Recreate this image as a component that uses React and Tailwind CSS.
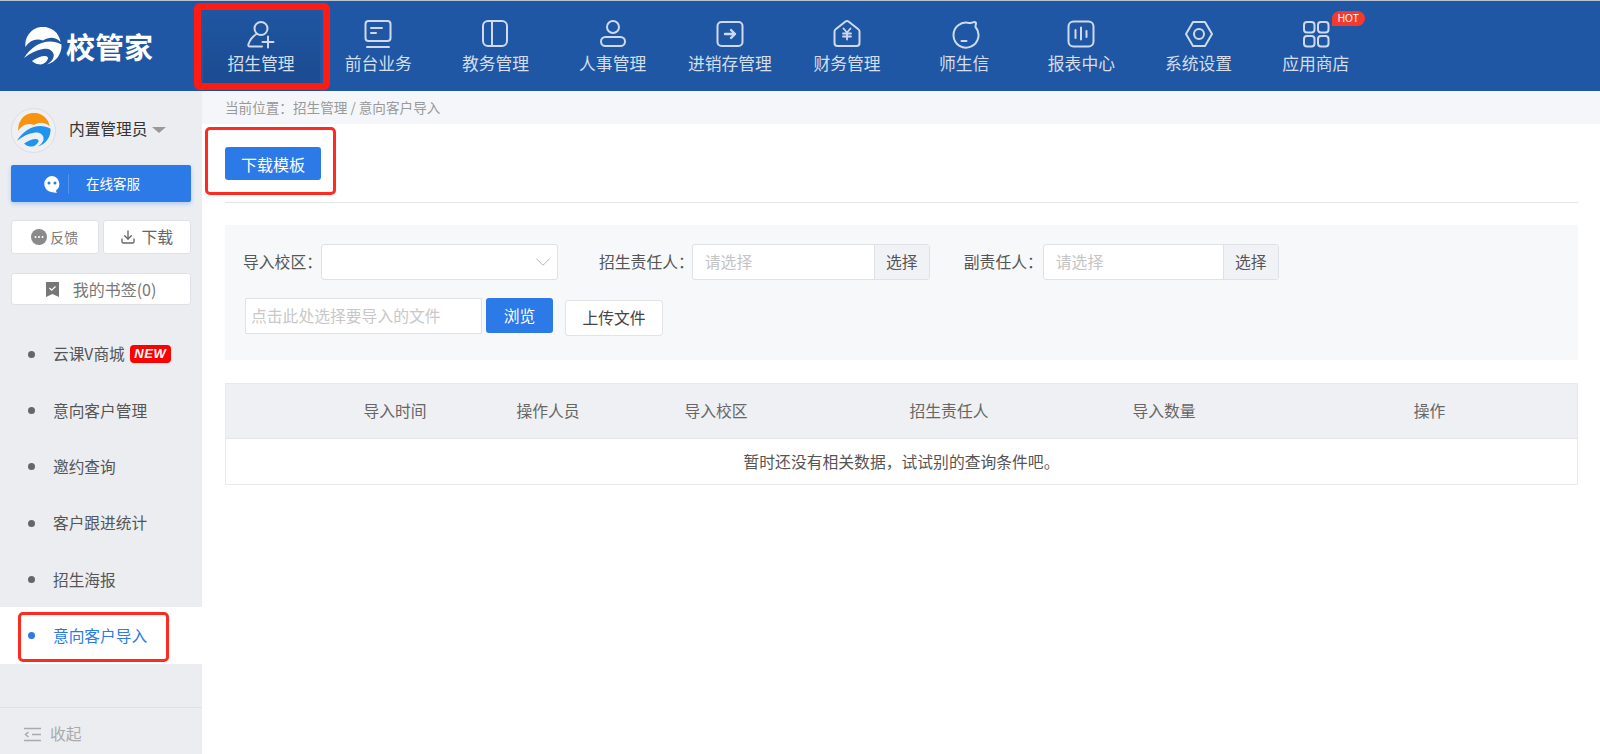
import { ChevronDown, Download } from "lucide-react";

const FONT = "font-['Noto_Sans_CJK_SC','Noto_Sans',sans-serif]";

function Svg({ children }) {
  return (
    <svg width="32" height="32" viewBox="0 0 32 32" fill="none" stroke="#cfdaee" strokeWidth="2" strokeLinecap="round" strokeLinejoin="round">
      {children}
    </svg>
  );
}

// same swoosh is used for the header logo and the avatar, just other colours
function Swoosh({ size, top, bottom }) {
  return (
    <svg width={size} height={size} viewBox="0 0 38 38">
      <path d="M1.500 20A17.500 17.500 0 0 1 36.500 15C31 9.500 25 10 19 13.500 12 10.500 5 14 1.500 20z" fill={top} />
      <path d="M0 31C6 21 16 14.500 26 14.500c4 0 8 1 11.500 3C38 27 32 35 23 37.500c5-3 7.500-7 6.500-10.500-1-4-5.500-6-10.500-5C12 23 6 26.500 0 31z" fill={bottom} />
      <path d="M8 34c4-3 9-5 13-5 2 0 3 1 3 2.500-1 3-4 5.500-7 6-3 0-7-1-9-3.500z" fill={bottom} />
    </svg>
  );
}

const navItems = [
  {
    label: "招生管理",
    active: true,
    icon: (
      <Svg>
        <circle cx="16" cy="10.500" r="6.500" />
        <path d="M11.500 16C8 18 5 22 3.500 26c-.5 1.500 0 2.500 1.500 2.500h12" />
        <path d="M17.500 24h11M23 18.500v11" />
      </Svg>
    ),
  },
  {
    label: "前台业务",
    icon: (
      <Svg>
        <rect x="3.500" y="3" width="25" height="20" rx="3" />
        <path d="M9 10h11M9 15h5M5 29h22" />
      </Svg>
    ),
  },
  {
    label: "教务管理",
    icon: (
      <Svg>
        <rect x="4" y="3" width="24" height="25" rx="5" />
        <path d="M13 3v25" />
      </Svg>
    ),
  },
  {
    label: "人事管理",
    icon: (
      <Svg>
        <circle cx="16" cy="9" r="6" />
        <rect x="4" y="19" width="24" height="9" rx="4.500" />
      </Svg>
    ),
  },
  {
    label: "进销存管理",
    icon: (
      <Svg>
        <rect x="3.500" y="4" width="25" height="24" rx="4" />
        <path d="M11 16h10M17 12l4 4-4 4" strokeWidth="2.400" />
      </Svg>
    ),
  },
  {
    label: "财务管理",
    icon: (
      <Svg>
        <path d="M14.500 3.500 5 11c-1 .7-1.500 1.500-1.500 2.500V25c0 2 1 3 3 3h19c2 0 3-1 3-3V13.500c0-1-.5-1.800-1.500-2.500l-9.500-7.500c-1-.7-2-.7-3 0z" />
        <path d="m12.500 10.500 3.500 4 3.500-4M12 15.500h8M12 18.500h8M16 14.500v7" strokeWidth="1.800" />
      </Svg>
    ),
  },
  {
    label: "师生信",
    icon: (
      <Svg>
        <path d="M26.500 4c1 0 1.500.5 1.500 1.500 0 1-.7 2-.5 3.500A12.500 12.500 0 1 1 21 5c2 .5 3.500-1 5.500-1z" />
        <path d="M13.500 23h5" />
      </Svg>
    ),
  },
  {
    label: "报表中心",
    icon: (
      <Svg>
        <rect x="3.500" y="3.500" width="25" height="25" rx="5" />
        <path d="M10.500 12v8M16 9.500v12M21.500 13v6" />
      </Svg>
    ),
  },
  {
    label: "系统设置",
    icon: (
      <Svg>
        <path d="M10 4h12l7 12-7 12H10L3 16z" />
        <circle cx="16" cy="16" r="5" />
      </Svg>
    ),
  },
  {
    label: "应用商店",
    hot: true,
    icon: (
      <Svg>
        <rect x="4" y="4" width="10.500" height="10.500" rx="3" />
        <rect x="18" y="4" width="10.500" height="10.500" rx="3" />
        <rect x="4" y="18" width="10.500" height="10.500" rx="3" />
        <rect x="18" y="18" width="10.500" height="10.500" rx="3" />
      </Svg>
    ),
  },
];

const menuItems = ["云课V商城", "意向客户管理", "邀约查询", "客户跟进统计", "招生海报", "意向客户导入"];

const columns = ["", "导入时间", "操作人员", "导入校区", "招生责任人", "导入数量", "操作"];

function Logo() {
  return (
    <div className="flex items-center pl-[24px] w-[202.500px] shrink-0">
      <Swoosh size={38} top="#fff" bottom="#fff" />
      <span className="text-white text-[29px] font-bold leading-none ml-[4px]">校管家</span>
    </div>
  );
}

function NavItem({ item }) {
  return (
    <div className={`relative w-[117.200px] h-full flex flex-col items-center pt-[17px] ${item.active ? "bg-gradient-to-b from-[#1f57a4] to-[#1b4a8e]" : ""}`}>
      <div className="relative h-[32px]">
        {item.icon}
        {item.hot && (
          <span className="absolute left-[32px] top-[-7px] w-[33px] h-[15px] rounded-[8px] rounded-bl-none bg-[#f5392d] text-white text-[10px] leading-[15px] text-center font-['Liberation_Sans',sans-serif]">
            HOT
          </span>
        )}
      </div>
      <span className="text-[#d5deed] text-[16.800px] leading-[22px] mt-[2px] whitespace-nowrap">{item.label}</span>
      {item.active && (
        <span className="absolute left-[-9px] right-[-10px] top-[2px] bottom-[1px] border-[7px] border-[#ff1a12] rounded-[6px]" />
      )}
    </div>
  );
}

function Avatar() {
  return (
    <div className="w-[45px] h-[45px] rounded-full bg-[#eff0f3] border border-[#dcdee3] flex items-center justify-center">
      <Swoosh size={34} top="#f7930f" bottom="#1f94ee" />
    </div>
  );
}

function Sidebar() {
  return (
    <aside className="w-[202px] shrink-0 bg-[#ebedf1] flex flex-col">
      <div className="flex items-center pl-[11px] pt-[4px] h-[74px]">
        <Avatar />
        <span className="ml-[13px] mb-[3px] text-[15.700px] text-[#333]">内置管理员</span>
        <span className="ml-[5px] border-x-[7px] border-x-transparent border-t-[6px] border-t-[#999]" />
      </div>
      <div className="mx-[11px] h-[37px] bg-[#2b7ae8] rounded-[2px] shadow-[0_2px_4px_rgba(43,122,232,0.3)] flex items-center text-white">
        <svg className="ml-[32px]" width="18" height="18" viewBox="0 0 18 18" fill="#fff">
          <path d="M9 1a8 8 0 0 0-1 15.900c2 .3 4 .9 6 1.100-1-1-1-2-.8-2.700A8 8 0 0 0 9 1z" />
          <circle cx="6" cy="8" r="1.500" fill="#2b7ae8" />
          <circle cx="12" cy="8" r="1.500" fill="#2b7ae8" />
        </svg>
        <span className="ml-[7px] w-px h-[20px] bg-white/20" />
        <span className="ml-[17px] text-[13.500px]">在线客服</span>
      </div>
      <div className="mx-[11px] mt-[18px] flex gap-[4px]">
        <button className="w-[88px] h-[34px] bg-white border border-[#dfe1e6] rounded-[3px] flex items-center justify-center text-[14px] text-[#777]">
          <svg width="16" height="16" viewBox="0 0 16 16" className="mr-[3px]">
            <circle cx="8" cy="8" r="8" fill="#8a8a8a" />
            <circle cx="4.500" cy="8" r="1" fill="#fff" />
            <circle cx="8" cy="8" r="1" fill="#fff" />
            <circle cx="11.500" cy="8" r="1" fill="#fff" />
          </svg>
          反馈
        </button>
        <button className="w-[89px] h-[34px] bg-white border border-[#dfe1e6] rounded-[3px] flex items-center justify-center text-[15.800px] text-[#666]">
          <Download size={16} strokeWidth={2} className="mr-[5px]" />
          下载
        </button>
      </div>
      <button className="mx-[11px] mt-[19px] h-[32px] bg-white border border-[#dfe1e6] rounded-[3px] flex items-center justify-center text-[16px] text-[#777]">
        <svg width="13" height="15" viewBox="0 0 13 15" className="mr-[14px]">
          <path d="M0 0h13v15l-6.500-3L0 15z" fill="#777" />
          <path d="m3.500 6 2.200 2.200L9.500 4.500" stroke="#fff" strokeWidth="1.300" fill="none" />
        </svg>
        我的书签(0)
      </button>
      <nav className="mt-[21px] flex-1">
        {menuItems.map((m, i) => {
          const active = i === menuItems.length - 1;
          return (
            <div key={m} className={`relative h-[56.300px] flex items-center pl-[28px] ${active ? "bg-white" : ""}`}>
              <span className={`w-[7px] h-[7px] rounded-full ${active ? "bg-[#2b7ae8]" : "bg-[#666]"}`} />
              <span className={`ml-[18px] text-[15.700px] ${active ? "text-[#2b7ae8]" : "text-[#555]"}`}>{m}</span>
              {i === 0 && (
                <span className="ml-[5px] w-[41px] h-[18px] rounded-[4px] bg-[#f00] text-white text-[13px] leading-[18px] italic font-bold text-center tracking-[0.5px] font-['Liberation_Sans',sans-serif]">
                  NEW
                </span>
              )}
              {active && (
                <span className="absolute left-[18px] top-[5px] w-[151px] h-[50px] border-[3px] border-[#ff2a20] rounded-[5px]" />
              )}
            </div>
          );
        })}
      </nav>
      <div className="h-[47px] border-t border-[#dfe1e6] flex items-center pl-[24px] pt-[6px] text-[#aaa] text-[15.800px]">
        <svg width="17" height="15" viewBox="0 0 17 15" stroke="#aaa" strokeWidth="1.500" fill="none" className="mr-[9px]">
          <path d="M0 1.500h17M8 7.500h9M0 13.500h17M4.500 5 1.500 7.500l3 2.500" />
        </svg>
        收起
      </div>
    </aside>
  );
}

function Field({ label, labelCls, children }) {
  return (
    <div className={`flex items-center ${labelCls}`}>
      <span className="text-[15.800px] text-[#555] whitespace-nowrap">{label}</span>
      {children}
    </div>
  );
}

function Picker({ className }) {
  return (
    <div className={`flex h-[36px] rounded-[3px] border border-[#dfe1e8] bg-white overflow-hidden ${className}`}>
      <span className="flex-1 pl-[12px] leading-[34px] text-[15.800px] text-[#c4c4c4]">请选择</span>
      <span className="w-[55px] border-l border-[#dfe1e8] bg-[#f1f2f6] text-center leading-[34px] text-[15.800px] text-[#555]">选择</span>
    </div>
  );
}

function Main() {
  return (
    <main className="flex-1 min-w-0 bg-white">
      <div className="h-[33px] bg-[#f5f6fa] pl-[23px] leading-[33px] text-[13.600px] text-[#999]">当前位置：招生管理 / 意向客户导入</div>
      <div className="pl-[23px] pr-[22px]">
        <div className="h-[79px] pt-[23px] border-b border-[#e4e6ea]">
          <div className="relative w-[96px]">
            <button className="w-[96px] h-[33px] bg-[#2b7ae8] rounded-[3px] text-white text-[16px]">下载模板</button>
            <span className="absolute left-[-20px] top-[-20px] w-[131px] h-[68px] border-[3px] border-[#ff2a20] rounded-[5px]" />
          </div>
        </div>
        <div className="mt-[22px] h-[135px] bg-[#f7f8fa] pl-[18px] pt-[19px]">
          <div className="flex items-center">
            <Field label="导入校区：">
              <div className="-ml-[1px] w-[237px] h-[36px] rounded-[3px] border border-[#dfe1e8] bg-white flex items-center justify-end pr-[1px]">
                <ChevronDown size={26} strokeWidth={0.8} className="text-[#aaa]" />
              </div>
            </Field>
            <Field label="招生责任人：" labelCls="ml-[41px]">
              <Picker className="-ml-[2px] w-[238px]" />
            </Field>
            <Field label="副责任人：" labelCls="ml-[34px]">
              <Picker className="w-[236px]" />
            </Field>
          </div>
          <div className="flex items-start mt-[18px] pl-[2px]">
            <div className="w-[237px] h-[36px] border border-[#e2e3e8] bg-white pl-[5px] leading-[34px] text-[15.800px] text-[#c8c8c8]">点击此处选择要导入的文件</div>
            <button className="ml-[4px] w-[67px] h-[35px] bg-[#2b7ae8] rounded-[3px] text-white text-[15.800px]">浏览</button>
            <button className="ml-[12px] mt-[2px] w-[98px] h-[36px] bg-white border border-[#e2e3e8] rounded-[3px] text-[#444] text-[15.800px]">上传文件</button>
          </div>
        </div>
        <div className="mt-[23px] border border-[#e8e9ef]">
          <div className="grid grid-cols-[48px_242px_64px_272px_194px_236px_1fr] h-[55px] bg-[#eff0f4] border-b border-[#e4e5ec] items-center text-center text-[15.800px] text-[#666]">
            {columns.map((c, i) => (
              <div key={i} className="whitespace-nowrap">{c}</div>
            ))}
          </div>
          <div className="h-[45px] flex items-center justify-center text-[15.800px] text-[#555]">暂时还没有相关数据，试试别的查询条件吧。</div>
        </div>
      </div>
    </main>
  );
}

export default function App() {
  return (
    <div className={`w-[1600px] h-[754px] flex flex-col overflow-hidden bg-white ${FONT}`}>
      <header className="relative h-[91px] shrink-0 bg-[#1f57a4] border-t border-[#b8c4d6] flex">
        <Logo />
        {navItems.map((n) => (
          <NavItem key={n.label} item={n} />
        ))}
      </header>
      <div className="flex-1 min-h-0 flex">
        <Sidebar />
        <Main />
      </div>
    </div>
  );
}
